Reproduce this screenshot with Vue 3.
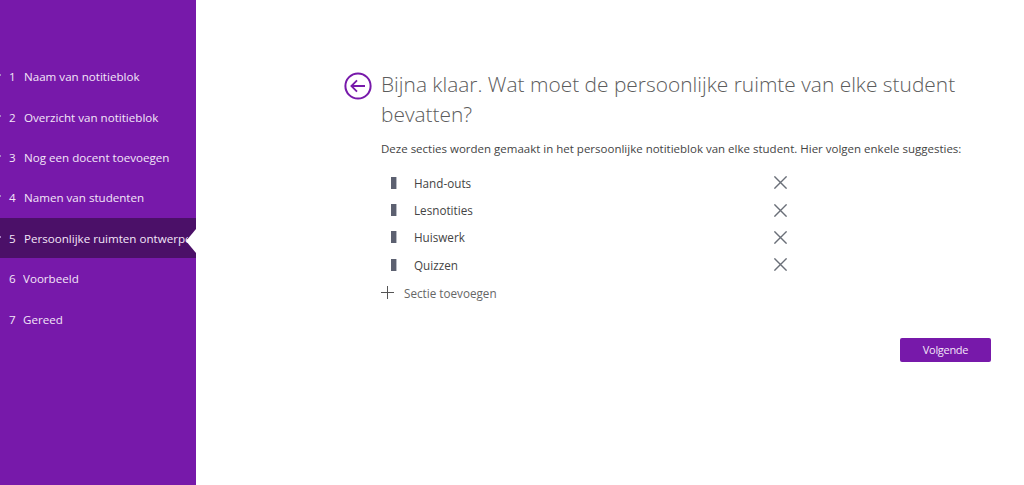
<template>
  <div class="wizard">
    <nav class="side">
      <div
        v-for="(step, i) in steps"
        :key="step.n"
        class="step"
        :class="{ active: i === 4, shifted: i > 4 }"
      >
        <span class="tick"></span>
        <span class="num">{{ step.n }}</span>
        <span class="label">{{ step.label }}</span>
        <span v-if="i === 4" class="pointer"></span>
      </div>
    </nav>

    <main class="content">
      <div class="head">
        <svg class="back" width="28" height="28" viewBox="0 0 28 28" fill="none">
          <circle cx="14" cy="14" r="12.6" stroke="#7719aa" stroke-width="2" />
          <path d="M21 14H7.5M13 8.4 7.4 14l5.6 5.6" stroke="#7719aa" stroke-width="1.8" />
        </svg>
        <h1>Bijna klaar. Wat moet de persoonlijke ruimte van elke student bevatten?</h1>
      </div>

      <div class="body">
        <p class="desc">Deze secties worden gemaakt in het persoonlijke notitieblok van elke student. Hier volgen enkele suggesties:</p>

        <ul class="sections">
          <li v-for="name in sections" :key="name" class="row">
            <span class="tab"></span>
            <span class="name">{{ name }}</span>
            <svg class="remove" width="13" height="13" viewBox="0 0 13 13" fill="none">
              <path d="M.4.4l12.2 12.2M12.6.4.4 12.6" stroke="#6a6f78" stroke-width="1.4" />
            </svg>
          </li>
        </ul>

        <div class="add">
          <svg width="13" height="13" viewBox="0 0 13 13" fill="none">
            <path d="M6.5 0v13M0 6.5h13" stroke="#555" stroke-width="1" />
          </svg>
          <span>Sectie toevoegen</span>
        </div>

        <div class="actions">
          <button type="button" class="next">Volgende</button>
        </div>
      </div>
    </main>
  </div>
</template>

<script setup>
const steps = [
  { n: 1, label: 'Naam van notitieblok' },
  { n: 2, label: 'Overzicht van notitieblok' },
  { n: 3, label: 'Nog een docent toevoegen' },
  { n: 4, label: 'Namen van studenten' },
  { n: 5, label: 'Persoonlijke ruimten ontwerpen' },
  { n: 6, label: 'Voorbeeld' },
  { n: 7, label: 'Gereed' },
]

const sections = ['Hand-outs', 'Lesnotities', 'Huiswerk', 'Quizzen']
</script>

<style scoped>
.wizard {
  display: flex;
  height: 485px;
  overflow: hidden;
  background: #fff;
  font-family: "Open Sans", "Noto Sans", sans-serif;
  color: #444;
}

.side {
  width: 196px;
  flex-shrink: 0;
  box-sizing: border-box;
  padding-top: 56.5px;
  background: #7719aa;
  color: #f3e6f8;
  font-size: 11.6px;
}

.step {
  position: relative;
  display: flex;
  align-items: center;
  height: 40.4px;
  overflow: hidden;
  white-space: nowrap;
}

.step.active {
  background: #4b1068;
}

.tick {
  width: 1px;
  height: 2px;
  margin-right: 8px;
  margin-top: -3px;
  background: #a77fc2;
}

.shifted .tick {
  background: none;
}

.num {
  width: 15px;
}

.shifted .num {
  width: 14px;
}

.label {
  overflow: hidden;
  width: 164px;
  flex-shrink: 0;
}

.pointer {
  position: absolute;
  right: 0;
  top: 11px;
  width: 0;
  height: 0;
  border-top: 12px solid transparent;
  border-bottom: 12px solid transparent;
  border-right: 10px solid #fff;
}

.content {
  flex: 1;
  padding: 69px 33px 0 148px;
}

.head {
  display: flex;
  gap: 9px;
  align-items: flex-start;
}

.back {
  flex-shrink: 0;
  margin-top: 3px;
}

h1 {
  margin: 0;
  font-size: 20.9px;
  font-weight: 300;
  line-height: 30px;
  color: #5c5c5c;
}

.body {
  padding-left: 37px;
}

.desc {
  margin: 11px 0 0;
  font-size: 11.5px;
  line-height: 18px;
  white-space: nowrap;
  color: #444;
}

.sections {
  list-style: none;
  margin: 11px 0 0;
  padding: 0;
}

.row {
  display: flex;
  align-items: center;
  height: 27.4px;
  font-size: 11.7px;
  color: #444;
}

.tab {
  box-sizing: border-box;
  width: 6px;
  height: 12px;
  margin-left: 9.5px;
  background: #5c6070;
  border-right: 1px solid #b9bcc4;
}

.name {
  width: 360px;
  margin-left: 17.5px;
}

.add {
  display: flex;
  align-items: center;
  gap: 10px;
  height: 28px;
  font-size: 11.7px;
  color: #666;
}

.actions {
  display: flex;
  justify-content: flex-end;
  margin-top: 31px;
}

.next {
  width: 91px;
  height: 24px;
  padding: 0;
  border: none;
  border-radius: 2px;
  background: #7719aa;
  color: #f3e6f8;
  font-family: inherit;
  font-size: 11px;
  letter-spacing: -0.3px;
}
</style>

<style>
body {
  background: #fff;
}
</style>
